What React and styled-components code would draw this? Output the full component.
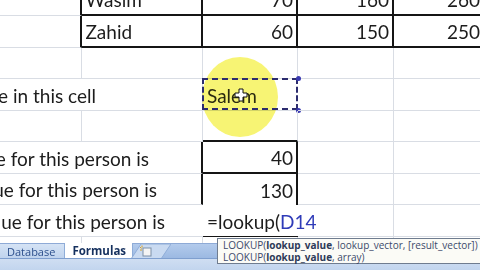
import styled, { createGlobalStyle } from "styled-components"

const Global = createGlobalStyle`
  html, body { margin: 0; padding: 0; background: #fff; }
  * { box-sizing: border-box; }
`

const GRID = "#d9dde4"
const INK = "#151515"

const edge = (v) => {
    if (v === "ink") return `2px solid ${INK}`
    if (v === "thin") return `1px solid ${INK}`
    if (v === "none") return "0"
    return `1px solid ${GRID}`
}

const Page = styled.div`
    position: relative;
    width: 480px;
    height: 270px;
    overflow: hidden;
    display: flex;
    flex-direction: column;
    background: #fff;
`

const SheetArea = styled.div`
    flex: none;
    height: 243px;
    overflow: hidden;
`

const Grid = styled.div`
    display: grid;
    grid-template-columns: 81.5px 121.5px 95px 96px 96px;
    grid-auto-rows: 31.5px;
    width: 490px;
    margin-top: -15.5px;
`

const Cell = styled.div`
    position: relative;
    grid-column: ${p => (p.$span ? `span ${p.$span}` : "auto")};
    display: flex;
    align-items: flex-end;
    justify-content: ${p => (p.$right ? "flex-end" : "flex-start")};
    padding: 0 ${p => p.$pr ?? 3}px 5px 4px;
    border-right: ${p => edge(p.$r)};
    border-bottom: ${p => edge(p.$b)};
    font-family: Lato, "Open Sans", sans-serif;
    font-size: 19px;
    line-height: 1;
    color: #1c1c1c;
    white-space: nowrap;
`

const Ref = styled.span`
    color: #2f3bb8;
`

const Highlight = styled.div`
    position: absolute;
    left: -1px;
    top: -22px;
    width: 76px;
    height: 80px;
    border-radius: 50%;
    background: #f6f35c;
    opacity: 0.85;
    mix-blend-mode: multiply;
    pointer-events: none;
`

const CopyMarquee = styled.div`
    position: absolute;
    inset: -1px 0 0 -1px;
    border: 2px dashed #2c2c6e;
    pointer-events: none;
`

const Handle = styled.i`
    position: absolute;
    right: -3px;
    ${p => (p.$bottom ? "bottom: -3px;" : "top: -3px;")}
    width: 5px;
    height: 5px;
    border-radius: 50%;
    background: #3a3ab0;
`

const CellText = styled.span`
    position: relative;
    color: #2a2a10;
`

const Cursor = styled.svg`
    position: absolute;
    left: 31px;
    top: 9px;
`

const EditBox = styled(Cell)`
    background: #fff;
    z-index: 1;
`

const TabBar = styled.div`
    flex: none;
    height: 15px;
    display: flex;
    align-items: stretch;
    background: linear-gradient(#b3cbec, #9cb9e2);
    border-top: 1px solid #8eaad6;
`

const Tab = styled.div`
    display: flex;
    align-items: center;
    padding: 0 ${p => (p.$active ? 6 : 9)}px 0 7px;
    font-family: "Open Sans", "DejaVu Sans", sans-serif;
    font-size: ${p => (p.$active ? 11.5 : 11)}px;
    font-weight: ${p => (p.$active ? 700 : 400)};
    color: ${p => (p.$active ? "#15305e" : "#2c4f8c")};
    background: ${p => (p.$active ? "#fff" : "linear-gradient(#d5e3f5, #bfd3ee)")};
    border-right: 1px solid #8fadd8;
    margin-top: ${p => (p.$active ? -1 : 0)}px;
`

const NewSheet = styled.svg`
    display: block;
    margin-left: -2px;
`

const StatusStrip = styled.div`
    flex: 1;
    background: linear-gradient(#cfdef2, #c2d5ee);
    border-top: 1px solid #7f9fcf;
`

const Tip = styled.div`
    position: absolute;
    left: 217px;
    top: 238px;
    width: 275px;
    height: 26px;
    padding: 1px 5px;
    background: #fbfbf6;
    border: 1px solid #6f7c8f;
    font-family: "Open Sans", "DejaVu Sans", sans-serif;
    font-size: 10px;
    line-height: 11.5px;
    color: #3b4a6b;
    white-space: nowrap;
`

const TipLine = styled.div``

const Arg = styled.b`
    font-weight: 700;
    color: #2d3a58;
`

export default function App() {
    return (
        <Page>
            <Global />
            <SheetArea>
                <Grid>
                    <Cell $r="ink" />
                    <Cell $r="ink" $b="ink">Wasim</Cell>
                    <Cell $right $r="ink" $b="ink">70</Cell>
                    <Cell $right $r="ink" $b="ink">160</Cell>
                    <Cell $right $r="ink" $b="ink" $pr={8}>260</Cell>

                    <Cell $r="ink" />
                    <Cell $r="ink" $b="ink">Zahid</Cell>
                    <Cell $right $r="ink" $b="ink">60</Cell>
                    <Cell $right $r="ink" $b="ink">150</Cell>
                    <Cell $right $r="ink" $b="ink" $pr={8}>250</Cell>

                    <Cell />
                    <Cell />
                    <Cell />
                    <Cell />
                    <Cell />

                    <Cell $span={2} $right $pr={106}>Type a name in this cell</Cell>
                    <Cell $r="none">
                        <Highlight />
                        <CellText>Salem</CellText>
                        <CopyMarquee />
                        <Handle />
                        <Handle $bottom />
                        <Cursor width="14" height="14" viewBox="0 0 14 14">
                            <path d="M5 1h4v4h4v4H9v4H5V9H1V5h4z" fill="#fff" stroke="#111" strokeWidth="1" />
                        </Cursor>
                    </Cell>
                    <Cell />
                    <Cell />

                    <Cell />
                    <Cell />
                    <Cell $b="ink" />
                    <Cell />
                    <Cell />

                    <Cell $span={2} $right $r="ink" $pr={52}>The age for this person is</Cell>
                    <Cell $right $r="ink" $b="ink">40</Cell>
                    <Cell />
                    <Cell />

                    <Cell $span={2} $right $r="ink" $pr={44}>The value for this person is</Cell>
                    <Cell $right $r="ink" $b="none">130</Cell>
                    <Cell />
                    <Cell />

                    <Cell $span={2} $right $r="none" $pr={38}>The value for this person is</Cell>
                    <EditBox $r="none" $b="thin">
                        =lookup(<Ref>D14</Ref>
                    </EditBox>
                    <Cell />
                    <Cell />

                    <Cell />
                    <Cell />
                    <Cell />
                    <Cell />
                    <Cell />
                </Grid>
            </SheetArea>
            <TabBar>
                <Tab>Database</Tab>
                <Tab $active>Formulas</Tab>
                <NewSheet width="40" height="15" viewBox="0 0 40 15">
                    <path d="M0 15 L10 0 H40 L30 15 Z" fill="#c9daf1" stroke="#8fadd8" />
                    <rect x="12" y="4" width="8" height="8" fill="#f4f4f4" stroke="#7d8fa8" />
                    <path d="M9 3 l1.5 1.5 M9 6 h2 M11 1.5 v2" stroke="#d8a020" strokeWidth="1" />
                </NewSheet>
            </TabBar>
            <StatusStrip />
            <Tip>
                <TipLine>LOOKUP(<Arg>lookup_value</Arg>, lookup_vector, [result_vector])</TipLine>
                <TipLine>LOOKUP(<Arg>lookup_value</Arg>, array)</TipLine>
            </Tip>
        </Page>
    )
}
